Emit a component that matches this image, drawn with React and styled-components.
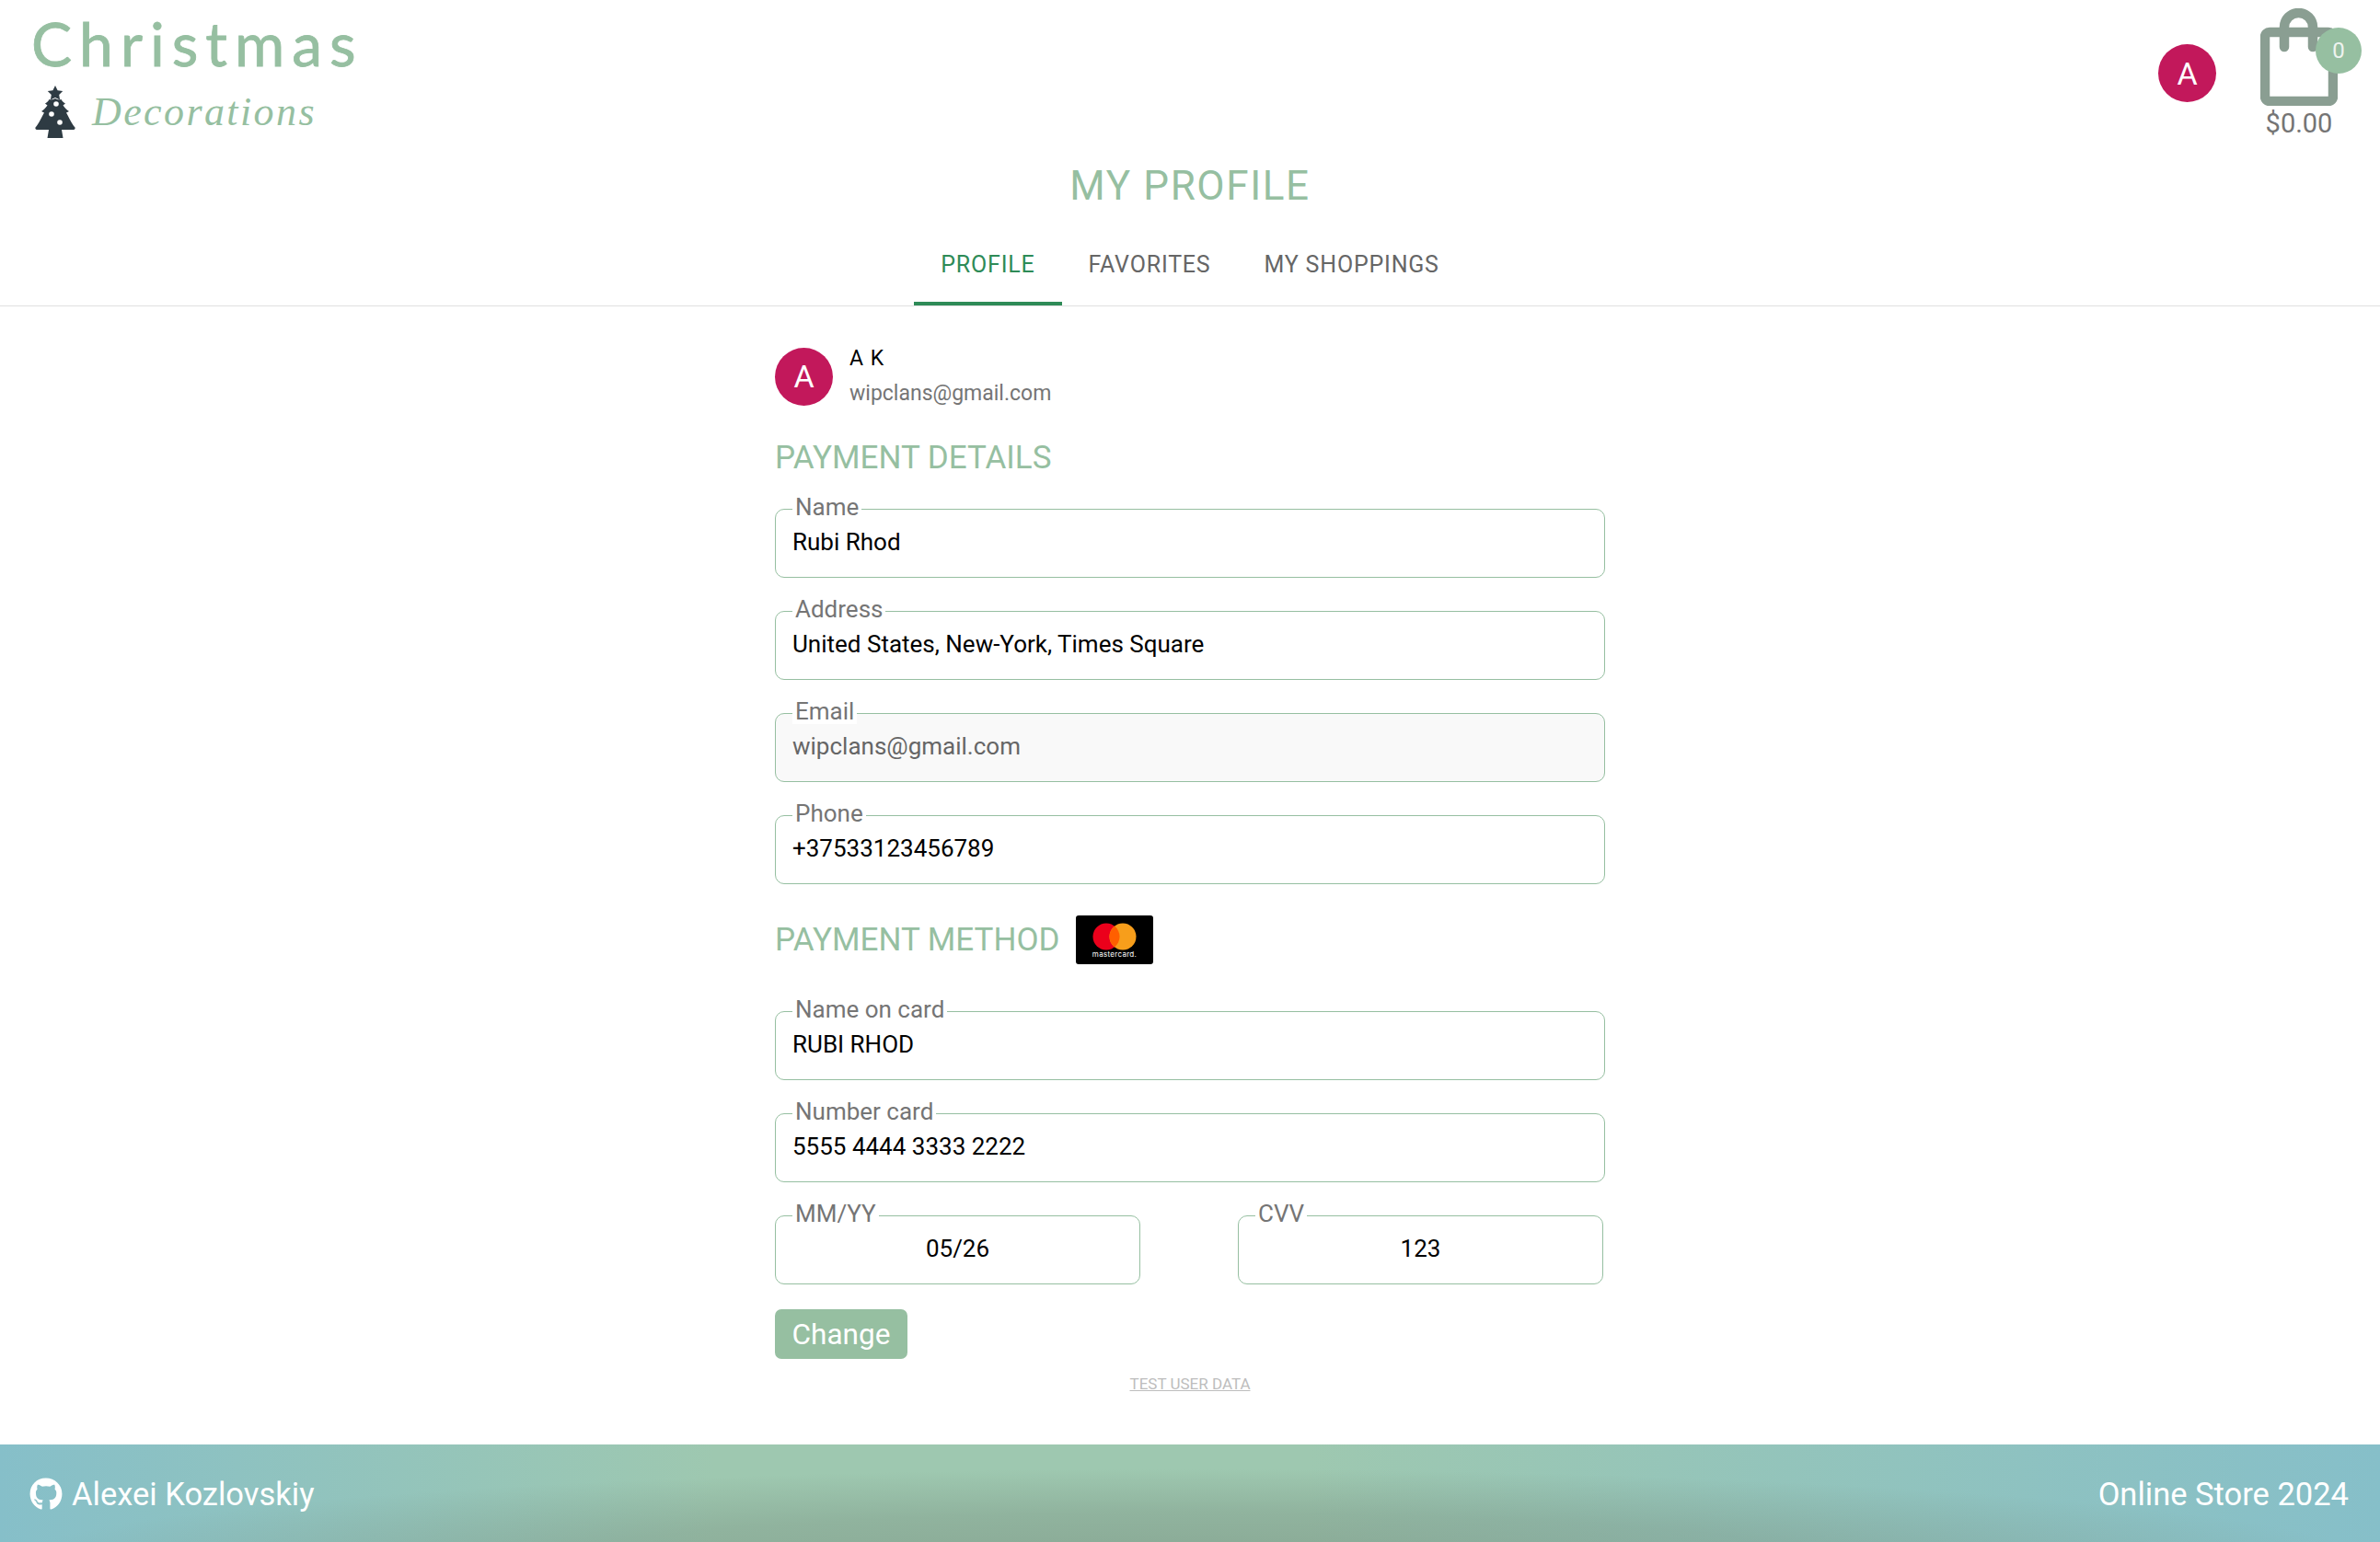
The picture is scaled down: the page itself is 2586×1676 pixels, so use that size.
import React from 'react';
import styled, { createGlobalStyle } from 'styled-components';
import { FaGithub } from 'react-icons/fa';

const GlobalStyle = createGlobalStyle`
  html, body {
    margin: 0;
    padding: 0;
    background: #fff;
    font-family: Roboto, "Liberation Sans", sans-serif;
  }
`;

const Page = styled.div`
  width: 2586px;
  height: 1676px;
  display: flex;
  flex-direction: column;
  overflow: hidden;
`;

const Header = styled.header`
  height: 160px;
  display: flex;
  justify-content: space-between;
  padding: 0 32px 0 34px;
  box-sizing: border-box;
`;

const Logo = styled.div`
  display: flex;
  flex-direction: column;
  padding-top: 12px;
`;

const LogoTop = styled.div`
  font-family: Lato, sans-serif;
  font-size: 66px;
  line-height: 70px;
  letter-spacing: 8px;
  color: #96bfa1;
  -webkit-text-stroke: 0.8px #96bfa1;
`;

const LogoBottom = styled.div`
  display: flex;
  align-items: center;
  gap: 18px;
  margin-left: 4px;
  margin-top: 11px;
`;

const LogoScript = styled.span`
  font-family: "Liberation Serif", serif;
  font-style: italic;
  font-size: 44px;
  letter-spacing: 2.4px;
  color: #96bfa1;
`;

const HeaderRight = styled.div`
  display: flex;
  align-items: flex-start;
  gap: 43px;
  padding-top: 9px;
`;

const Avatar = styled.div`
  width: 63px;
  height: 63px;
  border-radius: 50%;
  background: #c2185b;
  color: #fff;
  font-size: 34px;
  display: flex;
  align-items: center;
  justify-content: center;
  margin-top: ${({ $top }) => $top || 0}px;
  flex-shrink: 0;
`;

const Cart = styled.div`
  position: relative;
  width: 94px;
  display: flex;
  flex-direction: column;
  align-items: center;
  margin-right: 9px;
`;

const Badge = styled.div`
  position: absolute;
  top: 21px;
  right: -21px;
  width: 50px;
  height: 50px;
  border-radius: 50%;
  background: #96bfa1;
  color: #eef3ef;
  font-size: 24px;
  display: flex;
  align-items: center;
  justify-content: center;
`;

const CartTotal = styled.div`
  font-size: 29px;
  line-height: 34px;
  color: #757575;
  margin-top: 2px;
  white-space: nowrap;
`;

const Title = styled.h1`
  margin: 16px 0 0;
  text-align: center;
  font-size: 44px;
  line-height: 52px;
  font-weight: 400;
  letter-spacing: 1.6px;
  color: #96bfa1;
`;

const Tabs = styled.nav`
  display: flex;
  justify-content: center;
  margin-top: 14px;
  border-bottom: 1px solid #e0e0e0;
`;

const Tab = styled.div`
  height: 90px;
  box-sizing: border-box;
  padding: 5px 29px 0;
  display: flex;
  align-items: center;
  font-size: 25px;
  letter-spacing: 0.8px;
  color: ${({ $active }) => ($active ? '#2e8b57' : '#666')};
  border-bottom: 4px solid ${({ $active }) => ($active ? '#2e8b57' : 'transparent')};
`;

const Content = styled.main`
  width: 902px;
  margin: 0 auto;
  flex: 1;
  padding-top: 42px;
  box-sizing: border-box;
`;

const UserRow = styled.div`
  display: flex;
  align-items: center;
  gap: 18px;
`;

const UserName = styled.div`
  font-size: 23px;
  line-height: 30px;
  color: #000;
  letter-spacing: 1px;
`;

const UserEmail = styled.div`
  font-size: 23px;
  line-height: 30px;
  margin-top: 8px;
  color: #757575;
`;

const Section = styled.h2`
  margin: 34px 0 20px;
  font-size: 35px;
  line-height: 42px;
  font-weight: 400;
  color: #96bfa1;
`;

const MethodRow = styled.div`
  display: flex;
  align-items: center;
  gap: 18px;
  margin: 34px 0 37px;
`;

const MethodTitle = styled(Section)`
  margin: 0;
`;

const CardBadge = styled.svg`
  width: 84px;
  height: 53px;
  display: block;
`;

const Field = styled.fieldset`
  margin: 0 0 22px;
  padding: 0 18px;
  height: 87px;
  min-width: 0;
  box-sizing: content-box;
  border: 1px solid #96bfa1;
  border-radius: 10px;
  background: ${({ $disabled }) => ($disabled ? '#f9f9f9' : '#fff')};
  width: ${({ $half }) => ($half ? '359px' : '864px')};
`;

const Legend = styled.legend`
  margin-left: 0;
  padding: 0 3px;
  font-size: 26px;
  line-height: 28px;
  color: #757575;
  background: #fff;
  transform: translateY(-2px);
`;

const Value = styled.div`
  font-size: 26px;
  line-height: 30px;
  color: ${({ $disabled }) => ($disabled ? '#666' : '#000')};
  text-align: ${({ $center }) => ($center ? 'center' : 'left')};
  padding-top: 7px;
`;

const SplitRow = styled.div`
  display: flex;
  justify-content: space-between;
  width: 900px;
`;

const ChangeButton = styled.button`
  display: block;
  width: 144px;
  height: 54px;
  margin-top: 5px;
  padding: 0;
  border: none;
  border-radius: 7px;
  background: #96bfa1;
  color: #fff;
  font-family: inherit;
  font-size: 31.5px;
`;

const TestLink = styled.a`
  display: block;
  margin-top: 17px;
  text-align: center;
  font-size: 17px;
  line-height: 20px;
  color: #bdbdbd;
  text-decoration: underline;
`;

const Footer = styled.footer`
  height: 106px;
  flex-shrink: 0;
  display: flex;
  align-items: center;
  justify-content: space-between;
  padding: 2px 34px 0 32px;
  box-sizing: border-box;
  color: #fff;
  font-size: 34.5px;
  background:
    radial-gradient(ellipse 50% 100% at 50% 125%, rgba(115, 135, 120, 0.5) 0%, rgba(115, 135, 120, 0.32) 55%, rgba(115, 135, 120, 0) 100%),
    linear-gradient(90deg, #86bfc9 0%, #9ec8b0 30%, #9ec8b0 55%, #86bfc9 100%);
`;

const FooterLink = styled.div`
  display: flex;
  align-items: center;
  gap: 10px;
`;

function TreeIcon() {
  return (
    <svg width="44" height="57" viewBox="0 0 44 57">
      <path fill="#2e3b43" d="M22 0l2.600 5.200 5.600.8-4 4 .9 5.600-5.100-2.600-5.100 2.600.9-5.600-4-4 5.600-.8z" />
      <path fill="#2e3b43" d="M22 14C24 15.500 27 15.500 28.500 15C29.500 17 31.500 18.500 33 19.500L30.500 21.500C32.500 24.500 34.500 26.500 37 28L34 29.500C36.500 33.500 40 42 43.500 45.500C44 47 43 48 42 48H29L30.500 57H13.500L15 48H2C1 48 0 47 .5 45.500C4 42 7.500 33.500 10 29.500L7 28C9.500 26.500 11.500 24.500 13.500 21.500L11 19.500C12.500 18.500 14.500 17 15.500 15C17 15.500 20 15.500 22 14z" />
      <circle cx="23" cy="20" r="2.800" fill="#fff" />
      <circle cx="18" cy="31" r="2.800" fill="#fff" />
      <circle cx="27" cy="40" r="2.800" fill="#fff" />
    </svg>
  );
}

function BagIcon() {
  return (
    <svg width="84" height="106" viewBox="0 0 84 106" fill="none" stroke="#8a9e92" strokeWidth="10.500" strokeLinecap="round" strokeLinejoin="round">
      <rect x="5" y="26" width="74" height="75" rx="5" />
      <path d="M26 42V20.500a15.500 15.500 0 0 1 31 0V42" />
    </svg>
  );
}

function MastercardIcon() {
  return (
    <CardBadge viewBox="0 0 84 53">
      <rect width="84" height="53" rx="3" fill="#000" />
      <circle cx="33" cy="23" r="14.500" fill="#eb001b" />
      <circle cx="51" cy="23" r="14.500" fill="#f79e1b" />
      <path fill="#ff5f00" d="M42 11.600A14.500 14.500 0 0 1 42 34.400 14.500 14.500 0 0 1 42 11.600z" />
      <text x="42" y="45" textAnchor="middle" fontSize="8" fontFamily="Inter, sans-serif" fill="#fff" letterSpacing="0.3">mastercard.</text>
    </CardBadge>
  );
}

const detailFields = [
  { label: 'Name', value: 'Rubi Rhod' },
  { label: 'Address', value: 'United States, New-York, Times Square' },
  { label: 'Email', value: 'wipclans@gmail.com', disabled: true },
  { label: 'Phone', value: '+37533123456789' },
];

const cardFields = [
  { label: 'Name on card', value: 'RUBI RHOD' },
  { label: 'Number card', value: '5555 4444 3333 2222' },
];

const tabs = ['PROFILE', 'FAVORITES', 'MY SHOPPINGS'];

function FormField({ label, value, disabled, half }) {
  return (
    <Field $disabled={disabled} $half={half}>
      <Legend>{label}</Legend>
      <Value $center={half} $disabled={disabled}>{value}</Value>
    </Field>
  );
}

export default function App() {
  return (
    <Page>
      <GlobalStyle />
      <Header>
        <Logo>
          <LogoTop>Christmas</LogoTop>
          <LogoBottom>
            <TreeIcon />
            <LogoScript>Decorations</LogoScript>
          </LogoBottom>
        </Logo>
        <HeaderRight>
          <Avatar $top={39}>A</Avatar>
          <Cart>
            <BagIcon />
            <Badge>0</Badge>
            <CartTotal>$0.00</CartTotal>
          </Cart>
        </HeaderRight>
      </Header>
      <Title>MY PROFILE</Title>
      <Tabs>
        {tabs.map((tab, i) => (
          <Tab key={tab} $active={i === 0}>{tab}</Tab>
        ))}
      </Tabs>
      <Content>
        <UserRow>
          <Avatar>A</Avatar>
          <div>
            <UserName>A K</UserName>
            <UserEmail>wipclans@gmail.com</UserEmail>
          </div>
        </UserRow>
        <Section>PAYMENT DETAILS</Section>
        {detailFields.map((f) => (
          <FormField key={f.label} {...f} />
        ))}
        <MethodRow>
          <MethodTitle>PAYMENT METHOD</MethodTitle>
          <MastercardIcon />
        </MethodRow>
        {cardFields.map((f) => (
          <FormField key={f.label} {...f} />
        ))}
        <SplitRow>
          <FormField label="MM/YY" value="05/26" half />
          <FormField label="CVV" value="123" half />
        </SplitRow>
        <ChangeButton>Change</ChangeButton>
        <TestLink>TEST USER DATA</TestLink>
      </Content>
      <Footer>
        <FooterLink>
          <FaGithub size={36} />
          Alexei Kozlovskiy
        </FooterLink>
        <span>Online Store 2024</span>
      </Footer>
    </Page>
  );
}
